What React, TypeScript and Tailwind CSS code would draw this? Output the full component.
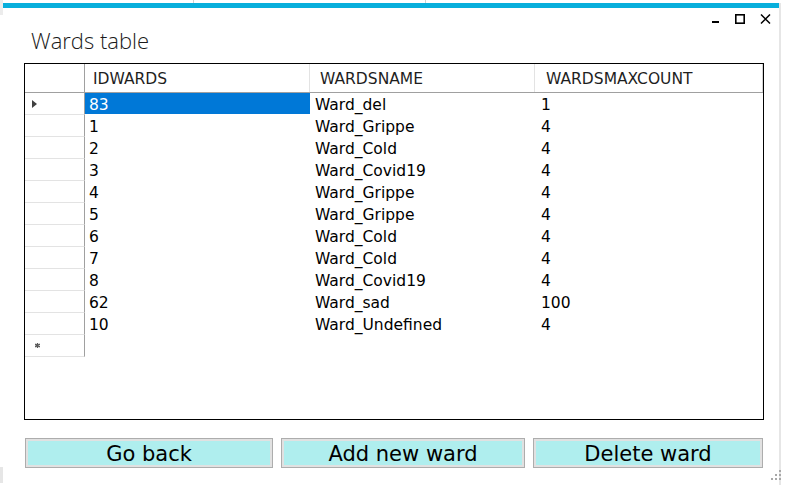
import React from "react";

const rows = [
  { id: "83", name: "Ward_del", max: "1" },
  { id: "1", name: "Ward_Grippe", max: "4" },
  { id: "2", name: "Ward_Cold", max: "4" },
  { id: "3", name: "Ward_Covid19", max: "4" },
  { id: "4", name: "Ward_Grippe", max: "4" },
  { id: "5", name: "Ward_Grippe", max: "4" },
  { id: "6", name: "Ward_Cold", max: "4" },
  { id: "7", name: "Ward_Cold", max: "4" },
  { id: "8", name: "Ward_Covid19", max: "4" },
  { id: "62", name: "Ward_sad", max: "100" },
  { id: "10", name: "Ward_Undefined", max: "4" },
];

function WindowControls() {
  return (
    <div className="flex h-[16px] shrink-0 items-start justify-end pt-[6px] pr-[8px]">
      <div className="flex h-[10px] w-[7px] items-end pb-[1px]">
        <div className="h-[2px] w-[7px] bg-black" />
      </div>
      <svg className="ml-[16px]" width="10" height="10" viewBox="0 0 10 10">
        <rect x="0.8" y="0.8" width="8.4" height="8.4" fill="none" stroke="#000" strokeWidth="1.6" />
      </svg>
      <svg className="ml-[15px]" width="11" height="10" viewBox="0 0 11 10">
        <path d="M1 0.5 L10 9.5 M10 0.5 L1 9.5" stroke="#000" strokeWidth="1.5" />
      </svg>
    </div>
  );
}

function WardsGrid() {
  return (
    <div className="ml-[21px] flex h-[357px] w-[740px] shrink-0 flex-col border border-black bg-white text-[15.5px] text-black">
      <div className="flex h-[29px] shrink-0 border-b border-[#a0a0a0] text-[#1e1e1e]">
        <div className="w-[60px] border-r border-[#a0a0a0]" />
        <div className="flex w-[225px] items-center border-r border-[#e3e3e3] pt-[3px] pl-[8px]">IDWARDS</div>
        <div className="flex w-[225px] items-center border-r border-[#e3e3e3] pt-[3px] pl-[10px]">WARDSNAME</div>
        <div className="flex w-[228px] items-center border-r border-[#d4d4d4] pt-[3px] pl-[11px]">WARDSMAXCOUNT</div>
      </div>
      {rows.map((r, i) => (
        <div key={i} className="flex h-[22px] shrink-0 items-start">
          <div className="flex h-[22px] w-[60px] items-center border-r border-b border-r-[#a0a0a0] border-b-[#e3e3e3] pl-[7px]">
            {i === 0 && (
              <div className="h-0 w-0 border-y-[4px] border-l-[5px] border-y-transparent border-l-[#404040]" />
            )}
          </div>
          <div
            className={
              i === 0
                ? "flex h-[21px] w-[225px] items-center bg-[#0078d7] pt-[4px] pl-[4px] text-white"
                : "flex h-[21px] w-[225px] items-center pt-[4px] pl-[4px]"
            }
          >
            {r.id}
          </div>
          <div className="flex h-[21px] w-[225px] items-center pt-[4px] pl-[5px]">{r.name}</div>
          <div className="flex h-[21px] w-[228px] items-center pt-[4px] pl-[6px]">{r.max}</div>
        </div>
      ))}
      <div className="flex h-[22px] shrink-0">
        <div className="flex h-[22px] w-[60px] items-center border-r border-b border-r-[#a0a0a0] border-b-[#e3e3e3] pl-[10px]">
          <svg width="5" height="5" viewBox="0 0 5 5">
            <path d="M2.5 0 V5 M0 1.2 L5 3.8 M0 3.8 L5 1.2" stroke="#5a5a5a" strokeWidth="1.3" />
          </svg>
        </div>
      </div>
    </div>
  );
}

function CyanButton({ label, width }: { label: string; width: string }) {
  return (
    <button type="button" className={`${width} h-[30px] border border-[#adadad] bg-[#e1e1e1] p-[2px]`}>
      <div className="flex h-full w-full items-center justify-center bg-[#afeeee] pt-[3px] text-[21px] leading-none text-black">
        {label}
      </div>
    </button>
  );
}

export default function App() {
  return (
    <div className="relative flex h-[485px] w-[785px] flex-col overflow-hidden bg-white font-['DejaVu_Sans',sans-serif]">
      {/* window behind, peeking out at the top */}
      <div className="flex h-[3px] shrink-0">
        <div className="w-[3px] bg-[#ececec]" />
        <div className="w-[191px] border-r border-[#cfcfcf]" />
        <div className="w-[232px] border-r border-[#cfcfcf]" />
      </div>

      <div className="flex flex-1">
        <div className="flex w-[3px] flex-col">
          <div className="h-[12px] bg-[#ececec]" />
          <div className="h-[452px]" />
          <div className="h-[16px] bg-[#e6e6e6]" />
        </div>

        <div className="flex w-[776px] flex-col bg-white">
          <div className="h-[5px] shrink-0 bg-[#08afdc]" />
          <WindowControls />
          <div className="h-[39px] shrink-0 pt-[1px] pl-[28px] font-['Open_Sans',sans-serif] text-[22px] leading-[30px] font-light text-[#1a1a1a]">
            Wards table
          </div>
          <WardsGrid />
          <div className="mt-[18px] ml-[22px] flex gap-[8px]">
            <CyanButton label="Go back" width="w-[248px]" />
            <CyanButton label="Add new ward" width="w-[244px]" />
            <CyanButton label="Delete ward" width="w-[230px]" />
          </div>
        </div>

        <div className="w-[2px] bg-[#e6e6e6]" />
        <div className="flex-1" />
      </div>

      <svg className="absolute left-[769px] top-[468px]" width="14" height="14" viewBox="0 0 14 14">
        <rect x="10" y="2" width="2" height="2" fill="#a8a8a8" />
        <rect x="6" y="6" width="2" height="2" fill="#a8a8a8" />
        <rect x="10" y="6" width="2" height="2" fill="#a8a8a8" />
        <rect x="2" y="10" width="2" height="2" fill="#a8a8a8" />
        <rect x="6" y="10" width="2" height="2" fill="#a8a8a8" />
        <rect x="10" y="10" width="2" height="2" fill="#a8a8a8" />
      </svg>
    </div>
  );
}
